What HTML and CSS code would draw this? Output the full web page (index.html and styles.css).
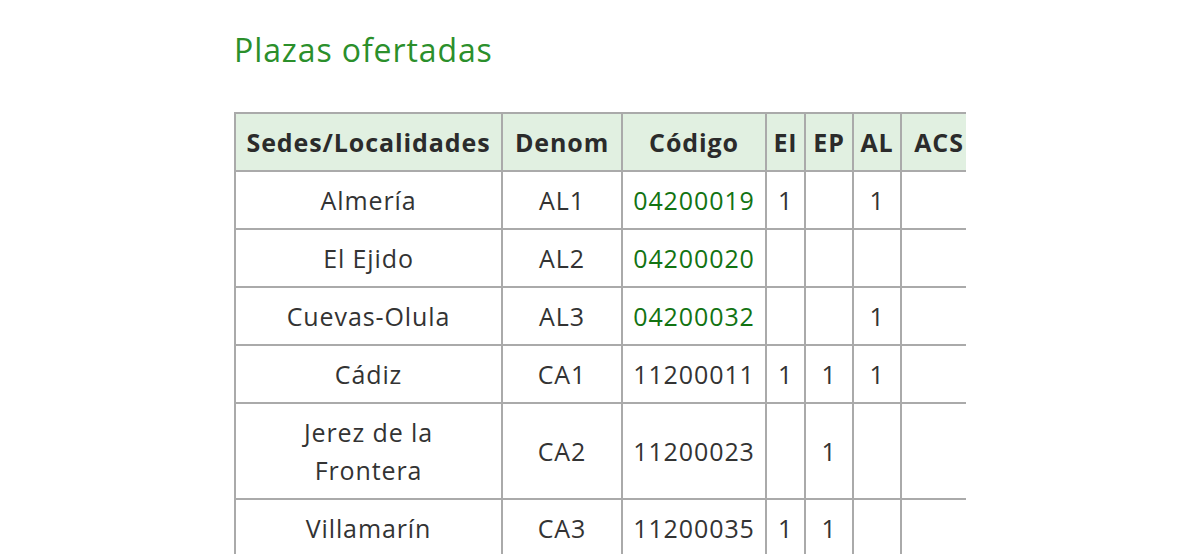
FILE: index.html
```html
<!DOCTYPE html>
<html lang="es">
<head>
<meta charset="utf-8">
<title>Plazas ofertadas</title>
<link rel="stylesheet" href="styles.css">
</head>
<body>
<main class="content">
  <h2 class="title">Plazas ofertadas</h2>
  <div class="table-wrap">
    <table class="plazas">
      <colgroup>
        <col class="c-sede">
        <col class="c-denom">
        <col class="c-cod">
        <col class="c-ei">
        <col class="c-ep">
        <col class="c-al">
        <col class="c-acs">
      </colgroup>
      <thead>
        <tr><th>Sedes/Localidades</th><th>Denom</th><th>Código</th><th>EI</th><th>EP</th><th>AL</th><th>ACS</th></tr>
      </thead>
      <tbody>
        <tr><td>Almería</td><td>AL1</td><td><a class="code" href="#">04200019</a></td><td>1</td><td></td><td>1</td><td></td></tr>
        <tr><td>El Ejido</td><td>AL2</td><td><a class="code" href="#">04200020</a></td><td></td><td></td><td></td><td></td></tr>
        <tr><td>Cuevas-Olula</td><td>AL3</td><td><a class="code" href="#">04200032</a></td><td></td><td></td><td>1</td><td></td></tr>
        <tr><td>Cádiz</td><td>CA1</td><td>11200011</td><td>1</td><td>1</td><td>1</td><td></td></tr>
        <tr><td>Jerez de la<br>Frontera</td><td>CA2</td><td>11200023</td><td></td><td>1</td><td></td><td></td></tr>
        <tr><td>Villamarín</td><td>CA3</td><td>11200035</td><td>1</td><td>1</td><td></td><td></td></tr>
      </tbody>
    </table>
  </div>
</main>
</body>
</html>
```

FILE: styles.css
```css
html, body {
  margin: 0;
  padding: 0;
  background: #ffffff;
}

body {
  font-family: "Open Sans", "DejaVu Sans", sans-serif;
  color: #333333;
}

.content {
  width: 732px;
  margin: 0 auto;
  padding-top: 28px;
}

.title {
  margin: 0 0 40px 0;
  font-size: 32px;
  line-height: 44px;
  font-weight: 500;
  color: #2b8f2b;
  letter-spacing: 0.9px;
}

.table-wrap {
  overflow: hidden;
  width: 732px;
}

.plazas {
  border-collapse: collapse;
  table-layout: fixed;
  width: 742px;
  font-size: 25px;
  line-height: 38px;
  letter-spacing: 0.9px;
}

.c-sede { width: 267px; }
.c-denom { width: 120px; }
.c-cod { width: 144px; }
.c-ei { width: 39px; }
.c-ep { width: 48px; }
.c-al { width: 48px; }
.c-acs { width: 76px; }

.plazas th,
.plazas td {
  border: 2px solid #aaaaaa;
  padding: 9px 6px;
  text-align: center;
  vertical-align: middle;
  white-space: nowrap;
}

.plazas th {
  background: #e1f0e1;
  font-weight: 700;
  color: #2b2b2b;
}

.plazas td {
  font-weight: 400;
}

.code {
  color: #127312;
  text-decoration: none;
}
```
